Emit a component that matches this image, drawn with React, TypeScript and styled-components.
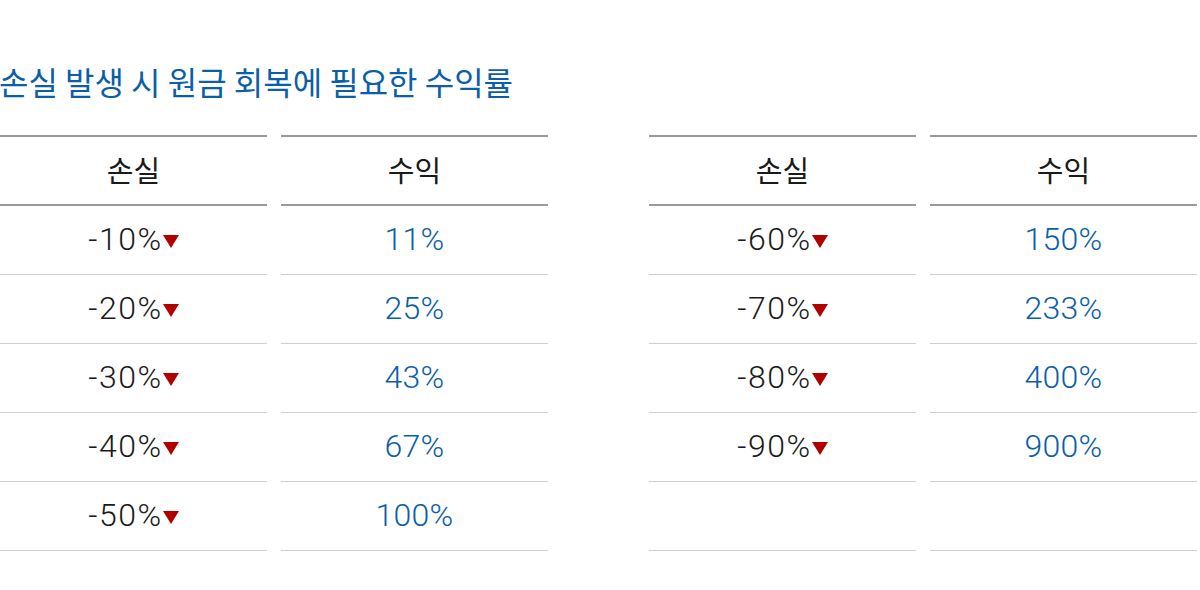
import styled, {createGlobalStyle} from "styled-components";

const GlobalStyle = createGlobalStyle`
  body {
    margin: 0;
    background: #fff;
    font-family: "Noto Sans CJK KR", "Noto Sans", sans-serif;
  }
`;

type Row = { loss: number; gain: number };

const LEFT_ROWS: Row[] = [
   {loss: 10, gain: 11},
   {loss: 20, gain: 25},
   {loss: 30, gain: 43},
   {loss: 40, gain: 67},
   {loss: 50, gain: 100},
];

const RIGHT_ROWS: (Row | null)[] = [
   {loss: 60, gain: 150},
   {loss: 70, gain: 233},
   {loss: 80, gain: 400},
   {loss: 90, gain: 900},
   null,
];

const Page = styled.div`
  width: 1200px;
  height: 590px;
  box-sizing: border-box;
  padding-top: 59px;
`;

const Title = styled.h2`
  margin: 0 0 32px -1px;
  font-size: 32px;
  font-weight: 400;
  line-height: 44px;
  color: #0b5ea8;
`;

const Tables = styled.div`
  display: flex;
  gap: 101px;
`;

const Table = styled.div`
  display: grid;
  grid-template-columns: 267px 267px;
  column-gap: 14px;
`;

const HeadCell = styled.div`
  height: 71px;
  box-sizing: border-box;
  padding-bottom: 4px;
  display: flex;
  align-items: center;
  justify-content: center;
  border-top: 2px solid #9a9a9a;
  border-bottom: 2px solid #9a9a9a;
  font-size: 29px;
  font-weight: 400;
  color: #1a1a1a;
`;

const Cell = styled.div<{ $gain?: boolean }>`
  height: 69px;
  box-sizing: border-box;
  padding-bottom: 3px;
  display: flex;
  align-items: center;
  justify-content: center;
  border-bottom: 1px solid #cfcfcf;
  font-family: Roboto, "Noto Sans", sans-serif;
  font-size: 32px;
  font-weight: 300;
  letter-spacing: ${p => (p.$gain ? "0.3px" : "1.5px")};
  color: ${p => (p.$gain ? "#0b5ea8" : "#1a1a1a")};
`;

const Down = styled.span`
  display: inline-block;
  width: 0;
  height: 0;
  margin-top: 6px;
  border-left: 8.5px solid transparent;
  border-right: 8.5px solid transparent;
  border-top: 13px solid #b00000;
`;

const RecoveryTable = ({rows}: { rows: (Row | null)[] }) => (
    <Table>
       <HeadCell>손실</HeadCell>
       <HeadCell>수익</HeadCell>
       {rows.map((row, i) =>
           row ? (
               [
                  <Cell key={`l${i}`}>-{row.loss}%<Down/></Cell>,
                  <Cell key={`g${i}`} $gain>{row.gain}%</Cell>,
               ]
           ) : (
               [<Cell key={`l${i}`}/>, <Cell key={`g${i}`}/>]
           )
       )}
    </Table>
);

export default function App() {
   return (
       <Page>
          <GlobalStyle/>
          <Title>손실 발생 시 원금 회복에 필요한 수익률</Title>
          <Tables>
             <RecoveryTable rows={LEFT_ROWS}/>
             <RecoveryTable rows={RIGHT_ROWS}/>
          </Tables>
       </Page>
   );
}
